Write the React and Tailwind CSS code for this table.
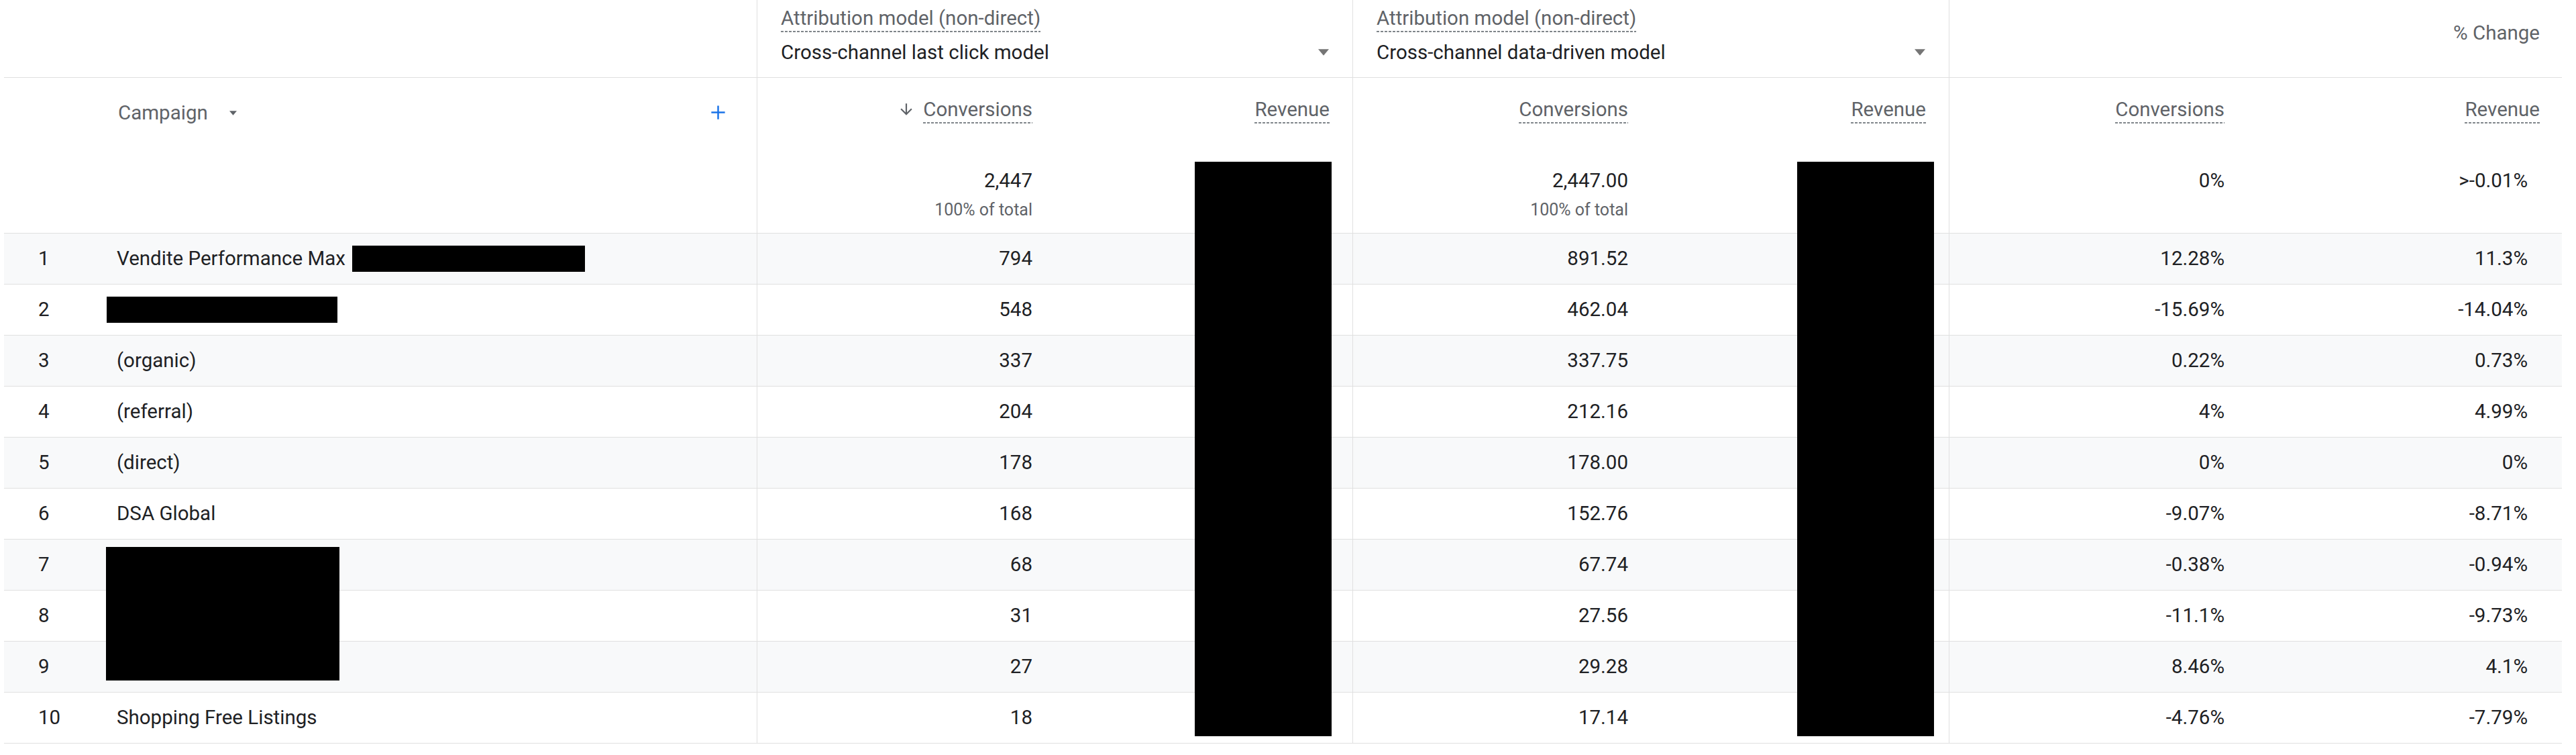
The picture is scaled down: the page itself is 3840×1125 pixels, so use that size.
import React from 'react';

const dash = 'h-[2px] mt-[4px] bg-[repeating-linear-gradient(90deg,#80868b_0_4px,transparent_4px_6px)]';

const rows = [
    { n: 1, name: 'Vendite Performance Max', redact: 'after', c1: '794', c2: '891.52', p1: '12.28%', p2: '11.3%' },
    { n: 2, name: '', redact: 'only', c1: '548', c2: '462.04', p1: '-15.69%', p2: '-14.04%' },
    { n: 3, name: '(organic)', c1: '337', c2: '337.75', p1: '0.22%', p2: '0.73%' },
    { n: 4, name: '(referral)', c1: '204', c2: '212.16', p1: '4%', p2: '4.99%' },
    { n: 5, name: '(direct)', c1: '178', c2: '178.00', p1: '0%', p2: '0%' },
    { n: 6, name: 'DSA Global', c1: '168', c2: '152.76', p1: '-9.07%', p2: '-8.71%' },
    { n: 7, name: '', c1: '68', c2: '67.74', p1: '-0.38%', p2: '-0.94%' },
    { n: 8, name: '', c1: '31', c2: '27.56', p1: '-11.1%', p2: '-9.73%' },
    { n: 9, name: '', c1: '27', c2: '29.28', p1: '8.46%', p2: '4.1%' },
    { n: 10, name: 'Shopping Free Listings', c1: '18', c2: '17.14', p1: '-4.76%', p2: '-7.79%' },
];

const cols = 'grid grid-cols-[1123px_444px_444px_444px_445px_444px_469px]';

const Caret = ({ className = '' }) => (
    <svg viewBox="0 0 10 6" className={className}>
        <polygon points="0,0 10,0 5,6" fill="currentColor" />
    </svg>
);

const Label = ({ children }) => (
    <span className="inline-block">
        <span className="block h-[30px] leading-[30px]">{children}</span>
        <div className={dash} />
    </span>
);

const ModelHeader = ({ model }) => (
    <div className="col-span-2 border-r border-[#e0e0e0] pl-[35px] pr-[35px] pt-[5px]">
        <span className="inline-block text-[#5f6368]">
            <span className="block h-[30px] leading-[30px]">Attribution model (non-direct)</span>
            <div className={dash} />
        </span>
        <div className="mt-[14px] flex items-center justify-between h-[30px]">
            <span className="leading-[30px] text-[#202124]">{model}</span>
            <Caret className="w-[16px] h-[10px] text-[#757575]" />
        </div>
    </div>
);

const MetricHead = ({ label, total, sub, arrow, pr = 'pr-[34px]', totalPr, border }) => (
    <div className={`flex flex-col items-end pt-[32px] ${pr} ${border ? 'border-r border-[#e0e0e0]' : ''}`}>
        <div className="flex items-start text-[#5f6368]">
            {arrow && (
                <svg viewBox="0 0 24 24" className="w-[26px] h-[26px] mt-[2px] mr-[12px] fill-[#5f6368]">
                    <path d="M20 12l-1.41-1.41L13 16.17V4h-2v12.17l-5.58-5.59L4 12l8 8 8-8z" />
                </svg>
            )}
            <Label>{label}</Label>
        </div>
        {total && (
            <div className={`mt-[70px] h-[30px] leading-[30px] text-[#202124] ${totalPr || ''}`}>{total}</div>
        )}
        {sub && <div className="mt-[16px] h-[26px] leading-[26px] text-[25px] text-[#5f6368]">{sub}</div>}
    </div>
);

export default function App() {
    return (
        <div className="min-h-screen bg-white font-['Roboto','Liberation_Sans',sans-serif] text-[29.5px] text-[#202124]">
            <div className="relative ml-[6px] w-[3813px]">
                {/* top header */}
                <div className={`${cols} h-[116px] border-b border-[#e0e0e0]`}>
                    <div className="border-r border-[#e0e0e0]" />
                    <ModelHeader model="Cross-channel last click model" />
                    <ModelHeader model="Cross-channel data-driven model" />
                    <div className="col-span-2 flex justify-end pt-[34px] pr-[33px] text-[#5f6368]">
                        <span className="h-[30px] leading-[30px]">% Change</span>
                    </div>
                </div>

                {/* metric header + totals */}
                <div className={`${cols} h-[232px] border-b border-[#e0e0e0]`}>
                    <div className="flex items-start justify-between border-r border-[#e0e0e0] pt-[37px] pl-[170px] pr-[44px]">
                        <div className="flex items-center h-[30px] text-[#5f6368]">
                            <span>Campaign</span>
                            <Caret className="ml-[32px] w-[11px] h-[7px] text-[#5f6368]" />
                        </div>
                        <svg viewBox="0 0 24 24" className="w-[27px] h-[27px] mt-[1px]">
                            <path d="M12 3v18M3 12h18" stroke="#1a73e8" strokeWidth="2.2" fill="none" />
                        </svg>
                    </div>
                    <MetricHead label="Conversions" arrow total="2,447" sub="100% of total" />
                    <MetricHead label="Revenue" border />
                    <MetricHead label="Conversions" total="2,447.00" sub="100% of total" />
                    <MetricHead label="Revenue" border />
                    <MetricHead label="Conversions" total="0%" />
                    <MetricHead label="Revenue" pr="pr-[33px]" total=">-0.01%" totalPr="pr-[18px]" />
                </div>

                {/* rows */}
                {rows.map((r) => (
                    <div
                        key={r.n}
                        className={`${cols} h-[76px] border-b border-[#e0e0e0] ${r.n % 2 === 1 ? 'bg-[#f8f9fa]' : 'bg-white'}`}
                    >
                        <div className="flex items-center border-r border-[#e0e0e0]">
                            <span className="w-[168px] shrink-0 pl-[51px]">{r.n}</span>
                            {r.redact === 'only' ? (
                                <div className="-ml-[15px] w-[344px] h-[39px] bg-black" />
                            ) : (
                                <span>{r.name}</span>
                            )}
                            {r.redact === 'after' && <div className="ml-[10px] w-[347px] h-[39px] bg-black" />}
                        </div>
                        <div className="flex items-center justify-end pr-[34px]">{r.c1}</div>
                        <div className="border-r border-[#e0e0e0]" />
                        <div className="flex items-center justify-end pr-[34px]">{r.c2}</div>
                        <div className="border-r border-[#e0e0e0]" />
                        <div className="flex items-center justify-end pr-[34px]">{r.p1}</div>
                        <div className="flex items-center justify-end pr-[51px]">{r.p2}</div>
                    </div>
                ))}

                {/* redactions laid over the table */}
                <div className="absolute left-[152px] top-[815px] w-[348px] h-[199px] bg-black" />
                <div className="absolute left-[1775px] top-[241px] w-[204px] h-[856px] bg-black" />
                <div className="absolute left-[2673px] top-[241px] w-[204px] h-[856px] bg-black" />
            </div>
        </div>
    );
}
